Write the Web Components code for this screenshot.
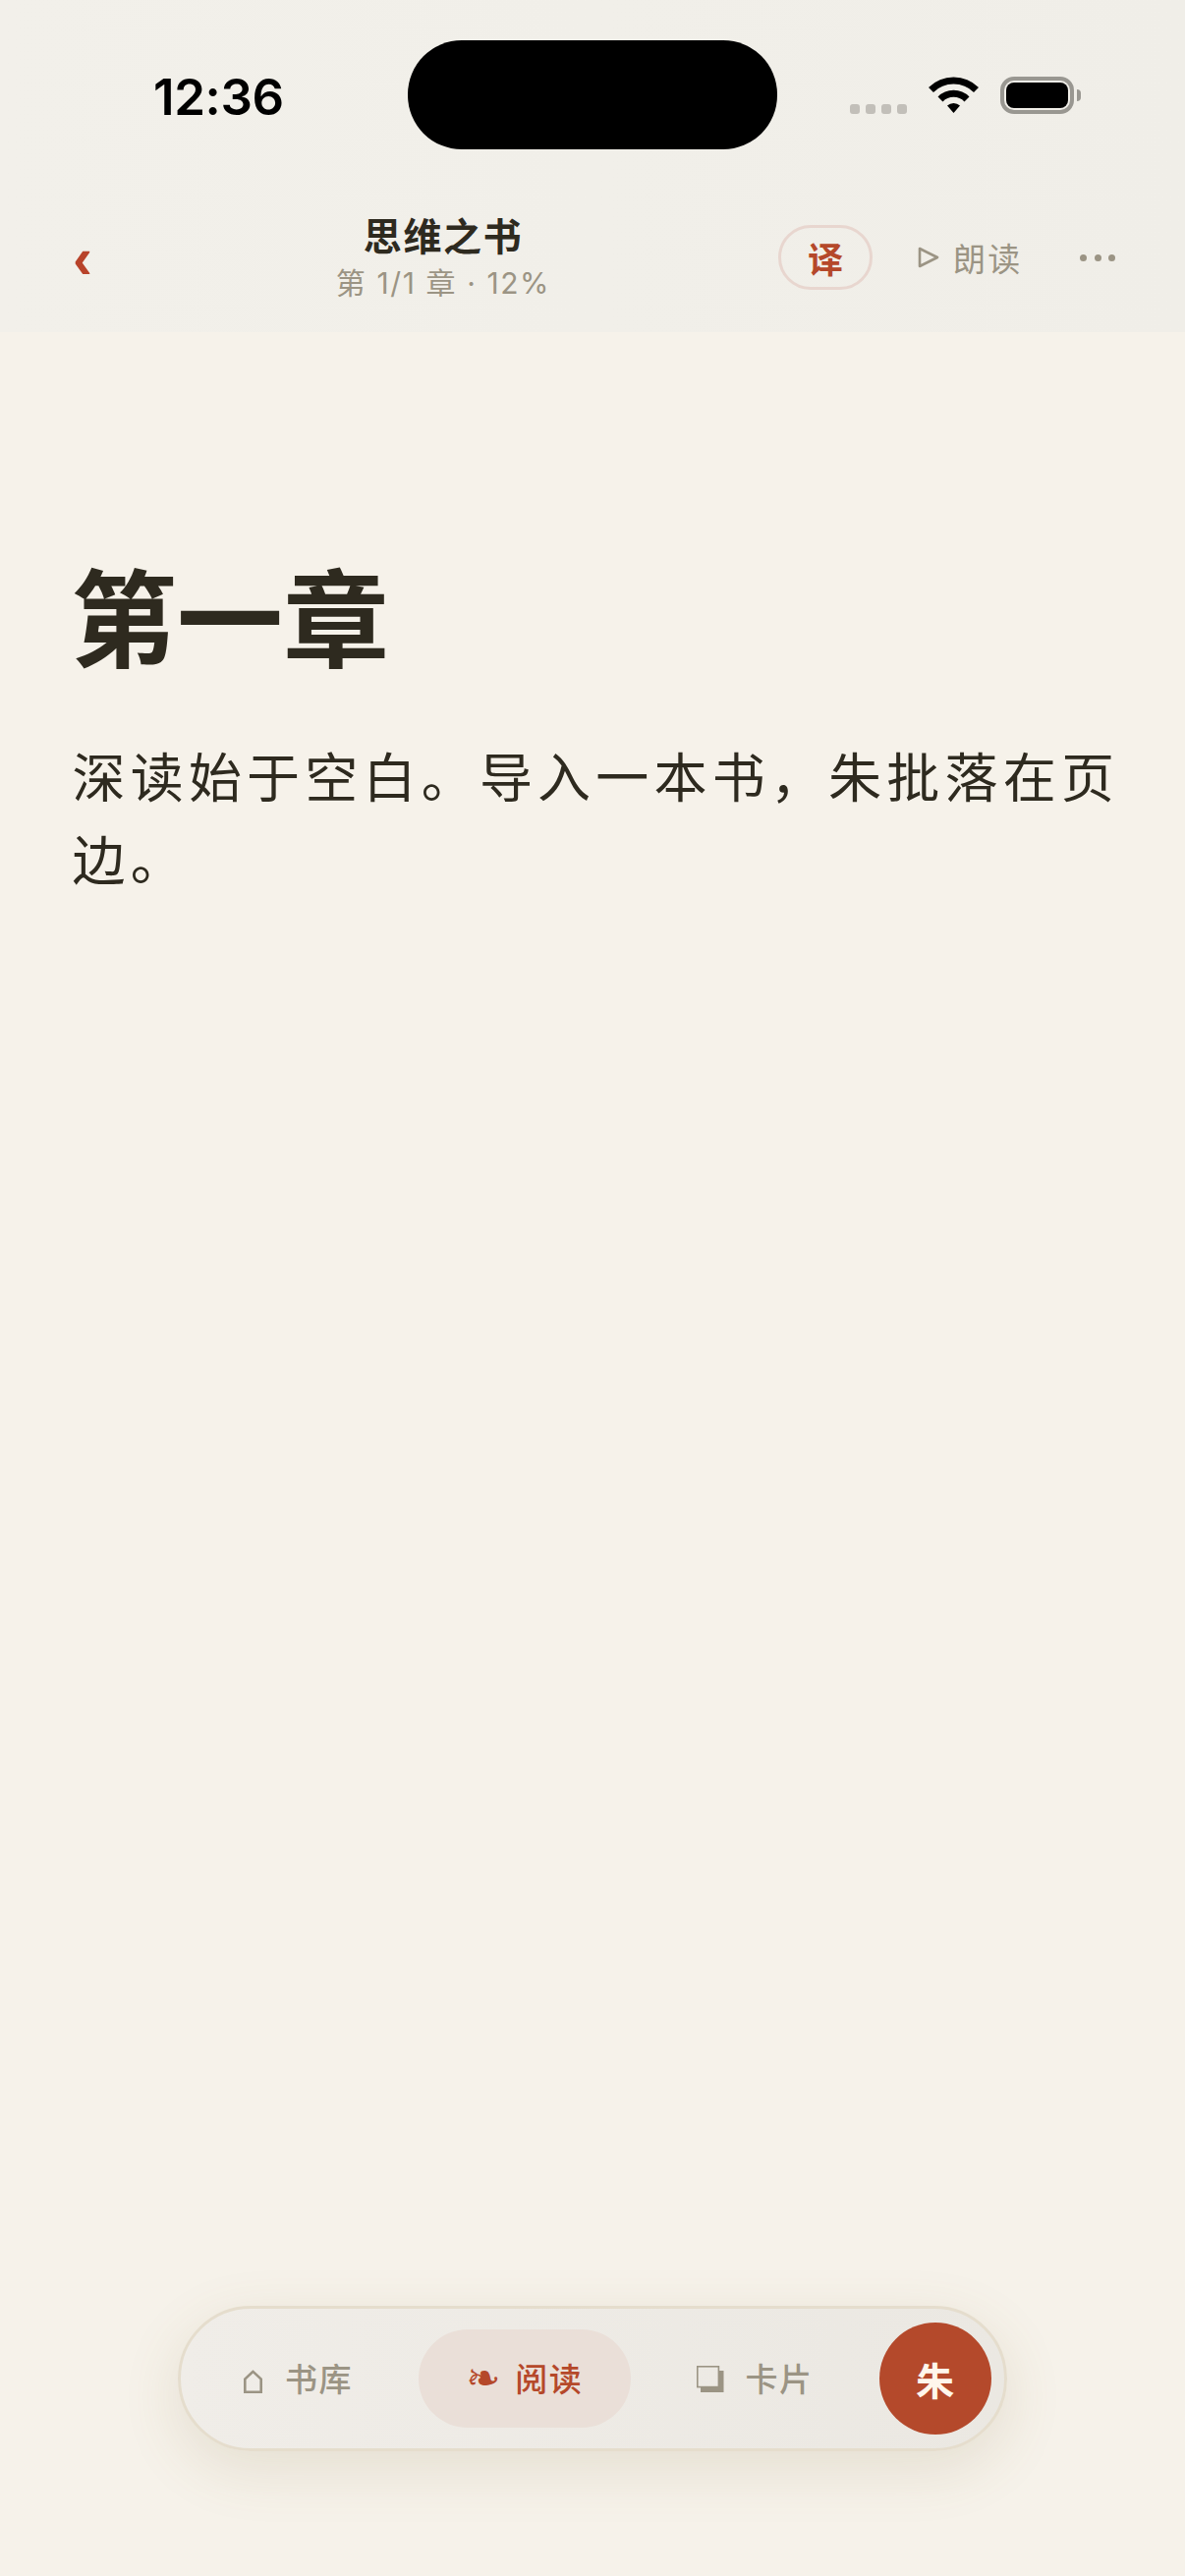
<!DOCTYPE html>
<html lang="zh">
<head>
<meta charset="utf-8">
<title>思维之书</title>
<style>
  html, body { margin: 0; padding: 0; background: #f6f2ea; }
  body { width: 1206px; height: 2622px; overflow: hidden; font-family: "Noto Sans CJK SC", sans-serif; }
</style>
</head>
<body>
<reader-app>
  <status-bar slot="top" time="12:36"></status-bar>
  <reader-header slot="top" title="思维之书" sub="第 1/1 章 · 12%"></reader-header>
  <chapter-view heading="第一章">深读始于空白。导入一本书，朱批落在页边。</chapter-view>
  <bottom-nav slot="nav">
    <nav-tab style="--icon-box: 42px">
      <svg slot="icon" style="margin-top: 7px" width="19" height="24" viewBox="0 0 19 24" fill="none" stroke="#9b9484" stroke-width="2.6"><path d="M1.3 22.7V9.5L9.5 1.9L17.7 9.5V22.7Z"/></svg>
      书库
    </nav-tab>
    <nav-tab active style="--icon-box: 50px">
      <span slot="icon">❧</span>
      阅读
    </nav-tab>
    <nav-tab style="--icon-box: 49px">
      <svg slot="icon" style="margin-top: 4px" width="28" height="28" viewBox="0 0 28 28"><path d="M4 22H23V5H27.5V27H4Z" fill="#9b9484"/><rect x="0.8" y="0.8" width="21.6" height="20.8" fill="none" stroke="#9b9484" stroke-width="1.6"/></svg>
      卡片
    </nav-tab>
  </bottom-nav>
</reader-app>

<script>
const CJK = '"Noto Sans CJK SC", sans-serif';

class ReaderApp extends HTMLElement {
  constructor() {
    super();
    this.attachShadow({mode: 'open'}).innerHTML = `
      <style>
        :host { display: flex; flex-direction: column; width: 1206px; height: 2622px; background: #f6f2ea; }
        header { background: linear-gradient(90deg, #f2f0ea, #f0eee8); height: 338px; display: flex; flex-direction: column; }
        main { flex: 1; min-height: 0; }
        footer { display: flex; justify-content: center; padding-bottom: 127px; }
      </style>
      <header><slot name="top"></slot></header>
      <main><slot></slot></main>
      <footer><slot name="nav"></slot></footer>`;
  }
}

class StatusBar extends HTMLElement {
  constructor() {
    super();
    this.attachShadow({mode: 'open'}).innerHTML = `
      <style>
        :host { display: flex; align-items: flex-start; height: 152px; box-sizing: border-box; padding-top: 41px; color: #000; }
        .time { width: 415px; box-sizing: border-box; padding: 27px 0 0 156px; font: 600 51px/62px Inter, sans-serif; letter-spacing: -0.4px; }
        .island { width: 376px; height: 111px; border-radius: 55px; background: #000; flex: none; }
        .right { display: flex; align-items: flex-start; padding-top: 37px; margin-left: 74px; }
        .dots { display: flex; gap: 6px; margin-top: 28px; }
        .dots i { width: 10px; height: 10px; border-radius: 3px; background: #c2bfb9; }
        svg { display: block; margin-left: 22px; }
        .batt { margin-left: 22px; width: 75px; height: 38px; box-sizing: border-box; border: 4px solid #999791; border-radius: 14px; padding: 2px; }
        .batt b { display: block; height: 100%; background: #000; border-radius: 8px; }
        .tip { width: 4px; height: 12px; margin: 13px 0 0 3px; background: #999791; border-radius: 0 6px 6px 0; }
      </style>
      <div class="time">${this.getAttribute('time')}</div>
      <div class="island"></div>
      <div class="right">
        <div class="dots"><i></i><i></i><i></i><i></i></div>
        <svg width="51" height="37" viewBox="0 0 51 37" fill="none" stroke="#000" stroke-width="7">
          <path d="M2.5 13.5A32.5 32.5 0 0 1 48.5 13.5"/>
          <path d="M12 23A19 19 0 0 1 39 23"/>
          <path d="M19 29.5A9.5 9.5 0 0 1 32 29.5L25.5 37Z" fill="#000" stroke="none"/>
        </svg>
        <div class="batt"><b></b></div>
        <div class="tip"></div>
      </div>`;
  }
}

class ReaderHeader extends HTMLElement {
  constructor() {
    super();
    this.attachShadow({mode: 'open'}).innerHTML = `
      <style>
        :host { display: flex; align-items: center; height: 186px; box-sizing: border-box; padding: 34px 71px 0 72px; font-family: ${CJK}; }
        .back { width: 266px; margin-left: 2px; flex: none; color: #b8432a; font: 700 60px/70px "Liberation Sans", sans-serif; margin-top: 2px; }
        .mid { width: 222px; flex: none; display: flex; flex-direction: column; align-items: center; margin-bottom: 4px; }
        .title { font-size: 39px; line-height: 48px; font-weight: 700; letter-spacing: 1.6px; color: #2e2a1f; white-space: nowrap; }
        .sub { margin-top: 7px; font-family: Inter, ${CJK}; font-size: 30px; line-height: 38px; letter-spacing: 1.6px; color: #9b9484; white-space: nowrap; }
        .trans { margin-left: 230px; width: 96px; height: 66px; box-sizing: border-box; border: 3px solid #e8d6cf; border-radius: 33px; display: flex; align-items: center; justify-content: center; color: #b5482a; font-size: 36px; font-weight: 700; }
        .read { margin-left: 46px; display: flex; align-items: center; color: #9b9484; font-size: 33px; letter-spacing: 2.2px; }
        .read svg { display: block; margin-right: 14px; }
        .more { margin-left: auto; display: flex; gap: 7.5px; }
        .more i { width: 7px; height: 7px; border-radius: 50%; background: #9b9484; }
      </style>
      <div class="back">‹</div>
      <div class="mid">
        <div class="title">${this.getAttribute('title')}</div>
        <div class="sub">${this.getAttribute('sub')}</div>
      </div>
      <div class="trans">译</div>
      <div class="read">
        <svg width="22" height="22" viewBox="0 0 22 22" fill="none" stroke="#9b9484" stroke-width="2.6" stroke-linejoin="round"><path d="M2 2L20 11L2 20Z"/></svg>
        <span>朗读</span>
      </div>
      <div class="more"><i></i><i></i><i></i></div>`;
  }
}

class ChapterView extends HTMLElement {
  constructor() {
    super();
    this.attachShadow({mode: 'open'}).innerHTML = `
      <style>
        :host { display: block; padding: 221px 58px 0 72px; color: #2e2a1f; font-family: ${CJK}; }
        h1 { margin: 0 0 58px; font-size: 108px; line-height: 130px; font-weight: 700; letter-spacing: 0; }
        p { margin: 0; padding-left: 1.5px; font-size: 54px; line-height: 84px; letter-spacing: 5.2px; }
      </style>
      <h1>${this.getAttribute('heading')}</h1>
      <p><slot></slot></p>`;
  }
}

class BottomNav extends HTMLElement {
  constructor() {
    super();
    this.attachShadow({mode: 'open'}).innerHTML = `
      <style>
        :host { display: flex; align-items: center; width: 844px; height: 148px; box-sizing: border-box; padding: 0 14px 0 16px; gap: 19px; border: 3px solid #e5ddcd; border-radius: 74px; background: linear-gradient(90deg, #f0ede8, #ebe8e2); box-shadow: 0 18px 60px rgba(130, 105, 60, 0.14); font-family: ${CJK}; }
        .fab { width: 114px; height: 114px; flex: none; border-radius: 50%; background: #b4492b; color: #fff6ec; display: flex; align-items: center; justify-content: center; font-size: 39px; font-weight: 700; }
      </style>
      <slot></slot>
      <div class="fab">朱</div>`;
  }
}

class NavTab extends HTMLElement {
  constructor() {
    super();
    this.attachShadow({mode: 'open'}).innerHTML = `
      <style>
        :host { display: flex; align-items: center; height: 100px; box-sizing: border-box; padding: 0 48px 2px; border-radius: 50px; color: #9b9484; font-size: 33px; font-weight: 500; letter-spacing: 1.6px; white-space: nowrap; }
        :host([active]) { background: #eadfd8; color: #b5482a; padding-right: 49px; }
        .icon { display: flex; align-items: center; flex: none; width: var(--icon-box); font-family: "DejaVu Sans", sans-serif; font-size: 42px; letter-spacing: 0; }
        ::slotted(svg) { display: block; }
      </style>
      <span class="icon"><slot name="icon"></slot></span>
      <slot></slot>`;
  }
}

customElements.define('reader-app', ReaderApp);
customElements.define('status-bar', StatusBar);
customElements.define('reader-header', ReaderHeader);
customElements.define('chapter-view', ChapterView);
customElements.define('bottom-nav', BottomNav);
customElements.define('nav-tab', NavTab);
</script>
</body>
</html>
